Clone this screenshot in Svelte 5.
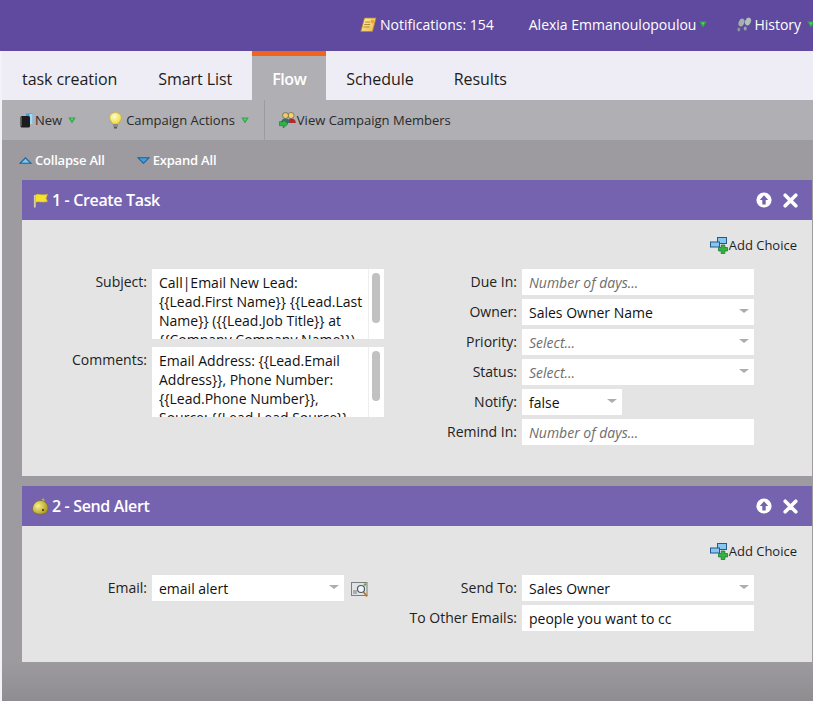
<script>
  const taskLeft = [
    { label: 'Subject:', text: 'Call|Email New Lead: {{Lead.First Name}} {{Lead.Last Name}} ({{Lead.Job Title}} at {{Company.Company Name}})' },
    { label: 'Comments:', text: 'Email Address: {{Lead.Email Address}}, Phone Number: {{Lead.Phone Number}}, Source: {{Lead.Lead Source}}' }
  ];
  const taskRight = [
    { label: 'Due In:', value: 'Number of days...', hint: true },
    { label: 'Owner:', value: 'Sales Owner Name', select: true },
    { label: 'Priority:', value: 'Select...', hint: true, select: true },
    { label: 'Status:', value: 'Select...', hint: true, select: true },
    { label: 'Notify:', value: 'false', select: true, short: true },
    { label: 'Remind In:', value: 'Number of days...', hint: true }
  ];
  const alertRight = [
    { label: 'Send To:', value: 'Sales Owner', select: true },
    { label: 'To Other Emails:', value: 'people you want to cc' }
  ];
</script>

{#snippet green()}
  <svg class="green" width="8" height="7" viewBox="0 0 8 7"><path d="M0.3 0.6H7.7L4 6.6Z" fill="#2ea84a"/><path d="M2.4 1.4H5.6L4 4.2Z" fill="#5fd06a"/></svg>
{/snippet}

{#snippet addChoice()}
  <div class="add-row">
    <span class="add">
      <svg class="addi" width="18" height="17" viewBox="0 0 18 17"><rect x="7.5" y="0.5" width="9" height="6" fill="#86c6f0" stroke="#23598c"/><rect x="0.5" y="5" width="9" height="5" fill="#86c6f0" stroke="#23598c"/><path d="M8.5 10.5h2.7V8h3.6v2.5h2.7V14h-2.7v2.7h-3.6V14H8.5Z" fill="#35b043" stroke="#14702a" stroke-width=".7"/></svg>
      <span>Add Choice</span>
    </span>
  </div>
{/snippet}

{#snippet header(title)}
  <span class="title">{title}</span>
  <span class="actions">
    <svg width="16" height="16" viewBox="0 0 16 16"><circle cx="8" cy="8" r="7.6" fill="#fff"/><path d="M8 3.2L12.2 8H9.7V12.4H6.3V8H3.8Z" fill="#7563b0"/></svg>
    <svg width="15" height="15" viewBox="0 0 15 15"><path d="M2.2 2.2L12.8 12.8M12.8 2.2L2.2 12.8" stroke="#fff" stroke-width="3.6" stroke-linecap="round"/></svg>
  </span>
{/snippet}

{#snippet field(f)}
  <div class="row">
    <span class="lab r">{f.label}</span>
    <div class="input" class:short={f.short} class:hint={f.hint}>
      <span>{f.value}</span>
      {#if f.select}<i class="caret"></i>{/if}
    </div>
  </div>
{/snippet}

<div class="page">
  <header class="top">
    <span class="ti">
      <svg width="17" height="16" viewBox="0 0 17 16"><defs><linearGradient id="note" x1="0" y1="0" x2="1" y2="1"><stop offset="0" stop-color="#fff3a8"/><stop offset="1" stop-color="#e8b84a"/></linearGradient></defs><path d="M4.5 1H16L12.5 14.5H0.8Z" fill="url(#note)" stroke="#b57f20" stroke-width=".8"/><path d="M5 5H10M4.2 7.5H10M3.6 10H9.5" stroke="#a8752a" stroke-width=".8"/><circle cx="12.5" cy="4.5" r="2" fill="#f2a23a"/></svg>
      <span class="t1">Notifications: 154</span>
    </span>
    <span class="ti user">
      <span>Alexia Emmanoulopoulou</span>
      {@render green()}
    </span>
    <span class="ti hist">
      <svg width="16" height="15" viewBox="0 0 16 15"><ellipse cx="12" cy="4.5" rx="2.8" ry="4" transform="rotate(22 12 4.5)" fill="#b3c0ba"/><ellipse cx="9.2" cy="11.5" rx="1.5" ry="2" fill="#93a8a0"/><ellipse cx="5.5" cy="5.5" rx="2.8" ry="4" transform="rotate(22 5.5 5.5)" fill="#a4b0aa"/><ellipse cx="2.8" cy="12.5" rx="1.5" ry="2" fill="#7f9890"/></svg>
      <span>History</span>
      {@render green()}
    </span>
  </header>

  <div class="main">
    <nav class="tabs">
      <span class="tab first">task creation</span>
      <span class="tab">Smart List</span>
      <span class="tab active">Flow</span>
      <span class="tab">Schedule</span>
      <span class="tab">Results</span>
    </nav>

    <div class="toolbar">
      <span class="tool new">
        <svg width="13" height="15" viewBox="0 0 13 15"><path d="M6 0.5H12.5V11H6Z" fill="#3f9fdc"/><path d="M9.5 1H12.5V11H9.5Z" fill="#a4d8f4"/><rect x="0.5" y="3" width="9.5" height="11.5" rx="1.5" fill="#1c1c1e"/><path d="M1.5 4V13" stroke="#555"/></svg>
        <span>New</span>
        {@render green()}
      </span>
      <span class="tool actions-t">
        <svg width="13" height="17" viewBox="0 0 13 17"><defs><radialGradient id="bulb" cx=".4" cy=".35" r=".7"><stop offset="0" stop-color="#fffbd0"/><stop offset="1" stop-color="#f0d930"/></radialGradient></defs><path d="M6.5 0.5C3 0.5 0.7 2.8 0.7 5.8C0.7 8.5 3 9.8 3.8 12H9.2C10 9.8 12.3 8.5 12.3 5.8C12.3 2.8 10 0.5 6.5 0.5Z" fill="url(#bulb)" stroke="#c4b02a" stroke-width=".6"/><rect x="4" y="12" width="5" height="3" fill="#8c8c8c"/><rect x="5" y="15" width="3" height="1.5" fill="#555"/></svg>
        <span>Campaign Actions</span>
        {@render green()}
      </span>
      <span class="sep"></span>
      <span class="tool members">
        <svg width="17" height="16" viewBox="0 0 17 16"><circle cx="12" cy="3.5" r="3" fill="#f2d274" stroke="#7d6420" stroke-width=".7"/><path d="M8 11C8 8 10 6.5 12.5 6.5S16.8 8 16.8 11Z" fill="#b02a32"/><circle cx="6.5" cy="3.5" r="3" fill="#e9c978" stroke="#5f5a30" stroke-width=".7"/><path d="M2 11C2 8 4 6.5 6.5 6.5S11 8 11 11Z" fill="#3f6a70"/><path d="M0.3 9.8H4.2V7.4L9 11.7L4.2 16V13.6H0.3Z" fill="#2fb544" stroke="#14702a" stroke-width=".6"/></svg>
        <span>View Campaign Members</span>
      </span>
    </div>

    <div class="canvas">
      <div class="collapse">
        <span class="cx">
          <svg width="13" height="7" viewBox="0 0 13 7"><path d="M6.5 0.8L12 6.3H1Z" fill="#7fc4ee" stroke="#1c5f96" stroke-width="1.1"/></svg>
          <span>Collapse All</span>
        </span>
        <span class="cx">
          <svg width="13" height="7" viewBox="0 0 13 7"><path d="M1 0.8H12L6.5 6.3Z" fill="#4a9cd8" stroke="#1c5f96" stroke-width="1.1"/></svg>
          <span>Expand All</span>
        </span>
      </div>

      <section class="panel">
        <div class="head">
          <svg class="pi" width="15" height="15" viewBox="0 0 15 15"><path d="M1.8 2V14.5" stroke="#d9cfa6" stroke-width="1.8"/><path d="M2.4 2C5 0.2 8 3 14.5 1.2L13 5.2L14.5 8.6C9 10 5.5 7.6 2.4 9.4Z" fill="#f5e22a" stroke="#d8b820" stroke-width=".5"/></svg>
          {@render header('1 - Create Task')}
        </div>
        <div class="body">
          {@render addChoice()}
          <div class="form">
            <div class="col left">
              {#each taskLeft as t}
                <div class="row">
                  <span class="lab l">{t.label}</span>
                  <div class="area">
                    <div class="area-text">{t.text}</div>
                    <div class="track"><i class="thumb"></i></div>
                  </div>
                </div>
              {/each}
            </div>
            <div class="col right">
              {#each taskRight as f}{@render field(f)}{/each}
            </div>
          </div>
        </div>
      </section>

      <section class="panel second">
        <div class="head">
          <svg class="pi bell" width="17" height="17" viewBox="0 0 17 17"><defs><radialGradient id="bl" cx=".35" cy=".4" r=".75"><stop offset="0" stop-color="#fbf28a"/><stop offset="1" stop-color="#a08c14"/></radialGradient></defs><path d="M10.5 0.8L12 3.2" stroke="#c4b24a" stroke-width="2"/><path d="M1 13C-0.5 9 2.5 3 8 2.5C13 2 16.5 6.5 16 11C15.5 14.5 12.5 16.5 8 16.3C5 16.2 2.2 15 1 13Z" fill="url(#bl)" stroke="#6f6212" stroke-width=".5"/><circle cx="11" cy="12" r="1.1" fill="#3f3708"/></svg>
          {@render header('2 - Send Alert')}
        </div>
        <div class="body b2">
          {@render addChoice()}
          <div class="form">
            <div class="col left">
              <div class="row">
                <span class="lab r">Email:</span>
                <div class="input email"><span>email alert</span><i class="caret"></i></div>
                <svg class="look" width="18" height="16" viewBox="0 0 18 16"><rect x="0.5" y="0.5" width="15.5" height="13" fill="#dfe3e6" stroke="#7b7f80"/><path d="M2 9H6M2 11H6" stroke="#777"/><circle cx="10" cy="7" r="3.5" fill="#eef6fb" stroke="#4e5a60" stroke-width="1.2"/><path d="M12.5 10L16 14.5" stroke="#b4762a" stroke-width="1.8"/><circle cx="14" cy="2.5" r="1.3" fill="#6aa83a"/></svg>
              </div>
            </div>
            <div class="col right">
              {#each alertRight as f}{@render field(f)}{/each}
            </div>
          </div>
        </div>
      </section>
    </div>
  </div>
</div>

<style>
  :global(body) { margin: 0; background: #f3f3f7; }
  .page {
    width: 813px; height: 701px; overflow: hidden;
    font-family: "Open Sans", "Liberation Sans", sans-serif;
    font-size: 14px; color: #1a1a1a;
    display: flex; flex-direction: column;
  }
  .top {
    height: 51px; box-sizing: border-box; flex: none; background: #604a9f; color: #fff;
    display: flex; align-items: center; padding: 0 0 2px 360px; white-space: nowrap;
    font-size: 14px;
  }
  .ti { display: inline-flex; align-items: center; }
  .t1 { margin-left: 3px; }
  .user { margin-left: 35px; }
  .user .green { margin-left: 3px; }
  .hist { margin-left: 29px; }
  .hist span { margin-left: 2px; }
  .hist .green { margin-left: 6px; flex: none; }
  .main { flex: 1; margin-left: 2px; display: flex; flex-direction: column; min-height: 0; }
  .tabs { height: 49px; flex: none; background: #eeedf5; display: flex; font-size: 16px; letter-spacing: -0.06px; }
  .tab { padding: 0 20px; line-height: 56px; height: 49px; box-sizing: border-box; color: #1c1c1c; }
  .first { padding-right: 21px; }
  .active {
    background: #b0afb3; border-top: 5px solid #f0641e; line-height: 46px; color: #fff;
    font-weight: 600; padding: 0; width: 74px; text-align: center; letter-spacing: -0.4px;
  }
  .toolbar {
    height: 40px; flex: none; background: #b0afb3; display: flex; align-items: center;
    font-size: 13px; color: #2a2a2a; padding-left: 18px;
  }
  .tool { display: inline-flex; align-items: center; }
  .new span { margin: 0 6px 0 2px; }
  .actions-t { margin-left: 33px; }
  .actions-t span { margin: 0 6px 0 4px; }
  .sep { width: 1px; align-self: stretch; background: #9c9ba0; margin-left: 15px; }
  .members { margin-left: 14px; }
  .members span { margin-left: 1px; }
  .canvas {
    flex: 1; min-height: 0;
    background: linear-gradient(#9d9b9f 0, #9d9b9f 520px, #8f8d92 100%);
    padding: 0 1px 0 20px;
  }
  .collapse {
    height: 40px; margin-left: -20px; padding-left: 17px; display: flex; align-items: center;
    color: #fff; font-size: 13px; font-weight: 600; letter-spacing: -0.2px;
  }
  .cx { display: inline-flex; align-items: center; gap: 3px; margin-right: 32px; }
  .panel { background: #e4e4e4; }
  .second { margin-top: 10px; }
  .head {
    height: 40px; background: #7563b0; color: #fff; display: flex; align-items: center;
    padding-left: 11px;
  }
  .pi { flex: none; }
  .title { margin-left: 4px; font-size: 16px; font-weight: 600; flex: 1; letter-spacing: -0.35px; }
  .bell { margin-left: -1px; margin-right: -1px; }
  .actions { display: flex; align-items: center; gap: 11px; padding-right: 14px; }
  .body { box-sizing: border-box; padding: 15px 15px 0 0; height: 256px; }
  .b2 { height: 136px; }
  .add-row { display: flex; justify-content: flex-end; height: 20px; }
  .add { display: inline-flex; align-items: center; font-size: 13px; color: #1f1f1f; }
  .addi { margin-right: 1px; }
  .form { display: flex; margin-top: 14px; }
  .col { display: flex; flex-direction: column; gap: 4px; }
  .left { width: 362px; gap: 8px; }
  .row { display: flex; align-items: flex-start; min-height: 26px; }
  .lab { text-align: right; line-height: 26px; padding-right: 5px; box-sizing: border-box; font-size: 14px; color: #222; }
  .l { width: 130px; line-height: 25px; }
  .left .r { width: 130px; }
  .right .lab { width: 138px; }
  .input {
    width: 232px; height: 26px; box-sizing: border-box; background: #fff; padding: 1px 7px 0;
    display: flex; align-items: center; justify-content: space-between; font-size: 14px; color: #111;
    line-height: 26px;
  }
  .hint { font-style: italic; color: #6d6d6d; }
  .short { width: 100px; }
  .email { width: 192px; }
  .caret {
    width: 0; height: 0; border-left: 5px solid transparent; border-right: 5px solid transparent;
    border-top: 4.5px solid #adadad; margin-right: -2px; margin-top: -4px;
  }
  .look { margin: 7px 0 0 7px; }
  .area { width: 232px; height: 70px; background: #fff; display: flex; overflow: hidden; }
  .area-text { flex: 1; padding: 4px 5px 0 7px; line-height: 19px; font-size: 14px; color: #111; overflow: hidden; min-width: 0; }
  .track { width: 16px; flex: none; border-left: 1px solid #eee; box-sizing: border-box; padding: 4px 3px 0 3px; }
  .thumb { display: block; width: 8px; height: 50px; border-radius: 4px; background: #c1c1c1; }
</style>
